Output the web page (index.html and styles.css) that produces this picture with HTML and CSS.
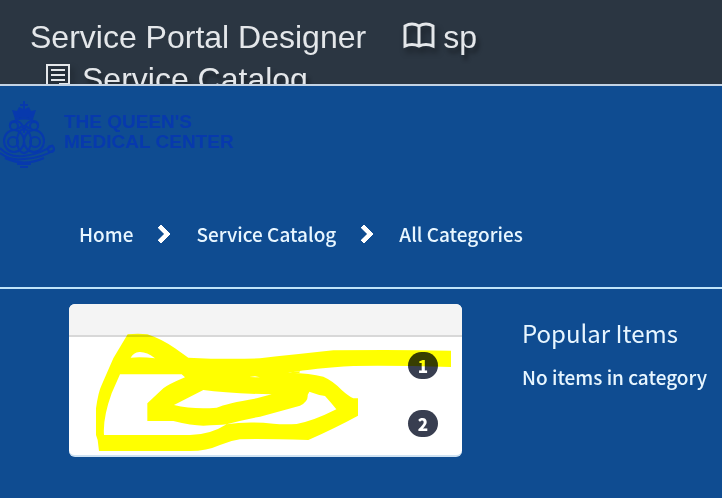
FILE: index.html
```
<!DOCTYPE html>
<html lang="en">
<head>
<meta charset="utf-8">
<title>Service Portal Designer</title>
<link rel="stylesheet" href="styles.css">
</head>
<body>
	<header class="designer_bar">
		<a href="#" class="brand">Service Portal Designer</a>
		<a href="#" class="portal_link">
			<svg class="book_icon" viewBox="0 0 32 27" aria-hidden="true">
				<path d="M2 24V4Q9 0 16 4Q23 0 30 4V24Q23 21 16 24Q9 21 2 24ZM16 4V24" />
			</svg>
			sp
		</a>
		<a href="#" class="page_link">
			<svg class="page_icon" viewBox="0 0 24 30" aria-hidden="true">
				<path d="M1 1H23V21L16 29H1ZM5 6H19M5 11H19M5 16H19M23 20H14V28" />
			</svg>
			Service Catalog
		</a>
	</header>

	<div class="logo_row">
		<a href="#" class="logo">
			<svg class="crest" viewBox="0 0 56 68" aria-hidden="true">
				<path class="solid" d="M23 0H25V3H28V5H25V8L29 6L31 10L36 9L33 18Q24 15 15 18L12 9L17 10L19 6L23 8V5H20V3H23Z" />
				<path d="M15 19Q24 16 33 19" />
				<circle cx="14" cy="25" r="4" />
				<circle cx="34" cy="25" r="4" />
				<path d="M10 26Q9 19 17 20Q24 22 24 32Q24 22 31 20Q39 19 38 26M18 28Q24 22 30 28" />
				<ellipse cx="14" cy="40" rx="10" ry="11" />
				<ellipse cx="34" cy="40" rx="10" ry="11" />
				<ellipse cx="24" cy="40" rx="7" ry="12" />
				<circle cx="13" cy="41" r="5" />
				<circle cx="35" cy="41" r="5" />
				<path d="M0 47Q9 57 24 55Q41 53 53 44M0 52Q11 60 24 58Q42 57 54 49M5 57Q24 66 44 57M17 63H31M20 66H28" />
				<circle cx="51" cy="48" r="3" />
			</svg>
			<span>The Queen's<br>Medical Center</span>
		</a>
	</div>

	<nav aria-label="Breadcrumb">
		<ol class="breadcrumbs">
			<li><a href="#">Home</a></li>
			<li><a href="#">Service Catalog</a></li>
			<li><a href="#">All Categories</a></li>
		</ol>
	</nav>

	<main class="columns">
		<section class="categories" aria-label="Categories">
			<div class="categories_head"></div>
			<ul>
				<li><span class="badge">1</span></li>
				<li><span class="badge">2</span></li>
			</ul>
			<!-- highlighter marks over the category names -->
			<svg class="marker" viewBox="27 27 1179 459" preserveAspectRatio="none" aria-hidden="true">
				<path fill-rule="evenodd" d="M203 118Q235 115 262 118Q305 132 345 160L385 188Q500 194 600 190Q700 179 820 166Q1000 163 1173 167V216Q1000 211 880 213Q760 220 690 233Q750 235 790 245Q820 258 845 285Q865 303 880 310H894V362Q830 397 745 435Q600 431 540 433Q510 437 480 450Q440 468 390 468H117L113 435L108 420V340Q115 290 125 270L160 190Z
					M212 188Q220 173 238 171Q260 170 285 190Q245 185 212 188Z
					M180 238H365L375 247Q325 268 310 280L262 325V378H340Q395 392 430 392Q475 391 500 388Q450 420 390 420H132Q128 370 155 295Z
					M342 330L430 285Q500 295 635 298L590 310Q500 325 470 338Q400 344 342 330Z
					M568 246L585 244L600 247Z
					M684 233L720 229L718 234Z
					M500 388Q550 374 600 365L720 332Q745 320 743 300L748 290Q775 300 795 303Q815 325 829 343Q760 378 710 387Q670 389 640 386Q560 378 500 388Z" />
			</svg>
		</section>
		<section class="popular">
			<h2>Popular Items</h2>
			<p>No items in category</p>
		</section>
	</main>
</body>
</html>
```
FILE: styles.css
```
*, *::before {
	box-sizing: border-box;
}
body {
	margin: 0;
	background: #0f4c91;
	color: #e8f6ff;
	font-family: "Noto Sans CJK JP", "Noto Sans", sans-serif;
	font-size: 19px;
	font-weight: 500;
	line-height: 28px;
}
a {
	color: inherit;
	text-decoration: none;
}
ul, ol {
	list-style: none;
	margin: 0;
	padding: 0;
}

/* top bar, the second row runs under its lower edge */
.designer_bar {
	display: flex;
	flex-wrap: wrap;
	align-content: flex-start;
	height: 86px;
	padding: 16px 30px 0;
	overflow: hidden;
	background: #2b3642;
	border-bottom: 2px solid #c3d3e4;
	color: #e4e7ea;
	font: 32px/42px "Liberation Sans", Arial, sans-serif;
}
.brand {
	margin-right: 37px;
}
.portal_link, .page_link {
	display: flex;
	text-shadow: 3px 5px 4px rgba(0, 0, 0, .4);
}
.portal_link {
	gap: 8px;
}
.page_link {
	gap: 12px;
	width: 100%;
	padding-left: 16px;
}
.designer_bar svg {
	fill: none;
	stroke: #e4e7ea;
	stroke-width: 3;
	filter: drop-shadow(3px 5px 3px rgba(0, 0, 0, .4));
}
.book_icon {
	width: 32px;
	height: 27px;
	margin-top: 6px;
}
.designer_bar .page_icon {
	width: 24px;
	height: 30px;
	margin-top: 6px;
	stroke-width: 2;
}

.logo_row {
	padding: 15px 0 16px;
}
.logo {
	display: flex;
	gap: 8px;
	color: #0739ad;
	font: bold 19px/20px "Liberation Sans", Arial, sans-serif;
	text-transform: uppercase;
}
.logo span {
	padding-top: 11px;
}
.crest {
	width: 56px;
	height: 68px;
	fill: none;
	stroke: #0739ad;
	stroke-width: 2;
}
.crest .solid {
	fill: #0739ad;
	stroke: none;
}

.breadcrumbs {
	display: flex;
	padding: 35px 79px 39px;
	border-bottom: 2px solid #bfe4fa;
}
.breadcrumbs li {
	display: flex;
	align-items: center;
}
.breadcrumbs li + li::before {
	content: "";
	width: 14px;
	height: 14px;
	margin: 0 28px 0 21px;
	border: solid #fff;
	border-width: 5px 5px 0 0;
	border-radius: 1px;
	transform: rotate(45deg);
}

.columns {
	display: grid;
	grid-template-columns: 393fr 200fr;
	gap: 60px;
	padding: 15px 0 40px 69px;
}
.categories {
	position: relative;
	background: #fff;
	border-bottom: 2px solid #cfe2f2;
	border-radius: 6px;
	overflow: hidden;
}
.categories_head {
	height: 33px;
	background: #f4f4f4;
	border-bottom: 2px solid #d8d8d8;
}
.categories ul {
	padding-bottom: 2px;
}
.categories li {
	display: flex;
	justify-content: flex-end;
	padding: 15px 24px 16px;
}
.badge {
	width: 30px;
	border-radius: 14px;
	background: #383e50;
	color: #fff;
	font-size: 17px;
	font-weight: 900;
	line-height: 27px;
	text-align: center;
}
.marker {
	position: absolute;
	top: 0;
	left: 0;
	width: 100%;
	height: 153px;
	fill: #ff0;
	mix-blend-mode: multiply;
}
.popular h2 {
	margin: 13px 0 14px;
	font-size: 24px;
	font-weight: 400;
	line-height: 32px;
}
.popular p {
	margin: 0;
}
```
